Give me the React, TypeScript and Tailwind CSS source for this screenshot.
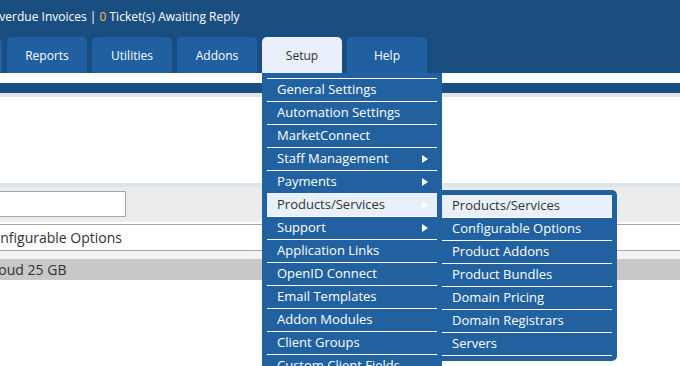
import React from "react";

const font = { fontFamily: '"Open Sans", "Noto Sans", Arial, sans-serif' };

const tabs = ["Orders", "Reports", "Utilities", "Addons", "Setup", "Help"];

const setupItems: { label: string; sub?: boolean; active?: boolean }[] = [
  { label: "General Settings" },
  { label: "Automation Settings" },
  { label: "MarketConnect" },
  { label: "Staff Management", sub: true },
  { label: "Payments", sub: true },
  { label: "Products/Services", sub: true, active: true },
  { label: "Support", sub: true },
  { label: "Application Links" },
  { label: "OpenID Connect" },
  { label: "Email Templates" },
  { label: "Addon Modules" },
  { label: "Client Groups" },
  { label: "Custom Client Fields" },
];

const productItems = [
  "Products/Services",
  "Configurable Options",
  "Product Addons",
  "Product Bundles",
  "Domain Pricing",
  "Domain Registrars",
  "Servers",
];

function Arrow() {
  return (
    <svg width="6" height="8" viewBox="0 0 6 8" className="shrink-0">
      <polygon points="0,0 6,4 0,8" fill="#ffffff" />
    </svg>
  );
}

function ProductsMenu() {
  return (
    <div className="absolute left-[180px] top-[117px] w-[175px] rounded-r-[5px] bg-[#2161a0] py-[5px] pr-[5px]">
      {productItems.map((label, i) => (
        <div
          key={label}
          className={`flex h-[23px] items-center border-b border-white pl-[10px] text-[13px] ${
            i === 0 ? "bg-[#e8f0fb] text-[#333333]" : "text-white"
          }`}
        >
          {label}
        </div>
      ))}
    </div>
  );
}

function SetupMenu() {
  return (
    <div className="absolute left-0 top-full z-10 w-[180px] bg-[#2161a0] px-[5px] pt-[5px] pb-[5px]">
      {setupItems.map((item) => (
        <div
          key={item.label}
          className={`flex h-[23px] items-center justify-between border-t border-white pl-[10px] pr-[9px] text-[13px] ${
            item.active ? "border-t-[#e8f0fb] bg-[#e8f0fb] text-[#333333]" : "text-white"
          }`}
        >
          <span className="whitespace-nowrap">{item.label}</span>
          {item.sub && <Arrow />}
        </div>
      ))}
      <ProductsMenu />
    </div>
  );
}

export default function App() {
  return (
    <div className="relative h-[366px] w-[680px] overflow-hidden bg-white" style={font}>
      {/* header */}
      <div className="h-[73px] bg-[#1b4e80]">
        <div className="flex h-[37px] items-start whitespace-nowrap pt-[9px] text-[12px] leading-[16px] text-white">
          <span className="-ml-[10px]">
            Overdue Invoices | <span className="text-[#f3c13a]">0</span> Ticket(s) Awaiting Reply
          </span>
        </div>
        <div className="-ml-[78px] flex h-[36px] gap-[5px]">
          {tabs.map((t) => (
            <div
              key={t}
              className={`relative flex w-[80px] shrink-0 items-center justify-center rounded-t-[5px] pt-[1px] text-[12px] ${
                t === "Setup" ? "bg-[#e9f0fb] text-[#333333]" : "bg-[#2060a0] text-white"
              }`}
            >
              {t}
              {t === "Setup" && <SetupMenu />}
            </div>
          ))}
        </div>
      </div>

      <div className="h-[10px] bg-white" />
      <div className="h-[10px] bg-[#1b4e80]" />
      <div className="h-[4px] bg-[#dde5eb]" />
      <div className="h-[86px] bg-white" />
      <div className="h-[4px] bg-[#dde5eb]" />

      {/* filter row */}
      <div className="flex h-[35px] items-start bg-[#ebecec] pt-[4px]">
        <div className="-ml-[10px] h-[26px] w-[136px] border border-[#a9a9a9] bg-white" />
      </div>
      <div className="h-[2px] bg-white" />
      <div className="-ml-[10px] flex h-[27px] w-[700px] items-center border-y border-[#aaaaaa] bg-white pl-[10px] text-[14px] text-[#333333]">
        <span className="-ml-[17px]">Configurable Options</span>
      </div>
      <div className="h-[8px] bg-[#f3f3f3]" />
      <div className="flex h-[21px] items-center bg-[#c8c8c8] text-[14px] text-[#333333]">
        <span className="-ml-[14px]">Cloud 25 GB</span>
      </div>
    </div>
  );
}
